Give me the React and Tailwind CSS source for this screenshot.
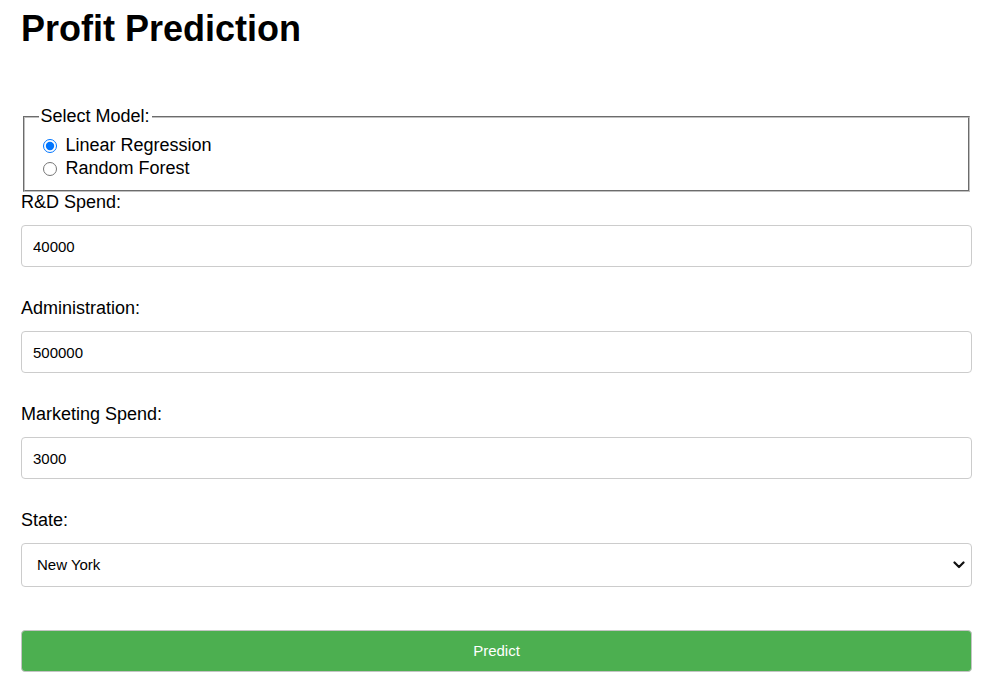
import { useState } from 'react';

const fields = [
  { id: 'rd', label: 'R&D Spend:', value: '40000' },
  { id: 'admin', label: 'Administration:', value: '500000' },
  { id: 'marketing', label: 'Marketing Spend:', value: '3000' },
];

const App = () => {
  const [model, setModel] = useState('linear');

  return (
    <div className="min-h-screen bg-white text-black font-['Liberation_Sans',Arial,sans-serif]">
      <div className="w-[951px] ml-[21px] pt-[8px]">
        <h1 className="text-[36px] font-bold leading-[41px] h-[41px]">Profit Prediction</h1>

        <fieldset className="mt-[57px] mx-[2px] border-2 [border-style:groove] border-[#c0c0c0] px-[13.5px] pt-[7px] pb-[10px] text-[18px]">
          <legend className="px-[2px] leading-[21px]">Select Model:</legend>
          {[
            { id: 'linear', text: 'Linear Regression' },
            { id: 'forest', text: 'Random Forest' },
          ].map((opt) => (
            <label key={opt.id} className="flex items-center h-[23px]">
              <input
                type="radio"
                name="model"
                checked={model === opt.id}
                onChange={() => setModel(opt.id)}
                className="m-0 ml-[4px] w-[14px] h-[14px]"
              />
              <span className="ml-[9px] leading-[21px]">{opt.text}</span>
            </label>
          ))}
        </fieldset>

        {fields.map((f, i) => (
          <div key={f.id} className={i === 0 ? '' : 'mt-[31px]'}>
            <label htmlFor={f.id} className="block text-[18px] leading-[21px] h-[21px]">{f.label}</label>
            <input
              id={f.id}
              type="text"
              defaultValue={f.value}
              className="mt-[12px] block w-full h-[42px] px-[11px] border border-[#ccc] rounded-[4px] text-[15px] text-black outline-none"
            />
          </div>
        ))}

        <div className="mt-[31px]">
          <label htmlFor="state" className="block text-[18px] leading-[21px] h-[21px]">State:</label>
          <div className="relative mt-[12px]">
            <select
              id="state"
              defaultValue="New York"
              className="appearance-none block w-full h-[44px] pl-[15px] pr-[36px] border border-[#ccc] rounded-[4px] text-[15px] text-black bg-white outline-none"
            >
              <option>New York</option>
              <option>California</option>
              <option>Florida</option>
            </select>
            <svg className="absolute right-[7px] top-[18px] pointer-events-none" width="12" height="8" viewBox="0 0 12 8" fill="none">
              <path d="M1.5 1.5 L6 6 L10.5 1.5" stroke="#111" strokeWidth="2.2" strokeLinecap="round" strokeLinejoin="round" />
            </svg>
          </div>
        </div>

        <button className="mt-[43px] block w-full h-[42px] bg-[#4CAF50] text-white text-[15px] border border-[#c4c4c4] rounded-[4px]">
          Predict
        </button>
      </div>
    </div>
  );
};

export default App;
